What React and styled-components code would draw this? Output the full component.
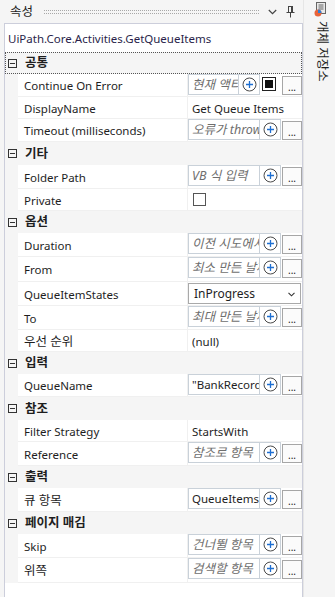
import React from "react";
import styled, { createGlobalStyle } from "styled-components";

const GlobalStyle = createGlobalStyle`
  * { box-sizing: border-box; }
  html, body { margin: 0; padding: 0; background: #f5f5f5; }
  body {
    font-family: "Noto Sans", "Noto Sans CJK KR", sans-serif;
    font-size: 11.5px;
    color: #1e1e1e;
  }
`;

const hasKo = (s) => /[가-힣]/.test(s);

const Shell = styled.div`
  display: flex;
  width: 335px;
  height: 597px;
  background: #f5f5f5;
  overflow: hidden;
`;

const Main = styled.div`
  width: 303px;
  display: flex;
  flex-direction: column;
`;

const TitleBar = styled.div`
  height: 23px;
  display: flex;
  align-items: center;
  padding: 0 8px 0 10px;
`;

const Title = styled.span`
  font-size: 12.5px;
  line-height: 16px;
`;

const Grip = styled.div`
  flex: 1;
  height: 4px;
  margin: 0 9px 0 11px;
  border-top: 1px dotted #a8a8a8;
  border-bottom: 1px dotted #a8a8a8;
`;

const BarIcon = styled.svg`
  display: block;
  margin-left: ${(p) => p.$gap || 0}px;
`;

const Panel = styled.div`
  flex: 1;
  margin-left: 4px;
  border: 1px solid #cccedb;
  border-bottom: none;
  background: #fff;
  display: flex;
  flex-direction: column;
`;

const ActivityName = styled.div`
  height: 28px;
  padding: 7px 0 0 3px;
  line-height: 16px;
  color: #2a1f4a;
`;

const Header = styled.div`
  height: ${(p) => p.$h || 22}px;
  display: flex;
  align-items: center;
  background: #f5f5f5;
  padding-left: 2px;
  font-size: 12.5px;
  font-weight: 700;
  border: 1px dotted ${(p) => (p.$focused ? "#555" : "transparent")};
`;

const Toggle = styled.span`
  position: relative;
  width: 9px;
  height: 9px;
  border: 1px solid #333;
  margin-right: 8px;
  &::after {
    content: "";
    position: absolute;
    left: 1px;
    right: 1px;
    top: 3px;
    height: 1px;
    background: #333;
  }
`;

const HeaderText = styled.span`
  line-height: 16px;
`;

const Row = styled.div`
  display: grid;
  grid-template-columns: 13px 170px 1fr;
  height: ${(p) => p.$h}px;
  background: #f5f5f5;
`;

const Label = styled.div`
  background: #fff;
  border-bottom: 1px solid #f0f0f0;
  border-right: 1px solid #f0f0f0;
  padding: 2px 0 0 6px;
  display: flex;
  align-items: center;
  font-size: ${(p) => (p.$ko ? 12.5 : 11.5)}px;
  line-height: 16px;
  white-space: nowrap;
`;

const Value = styled.div`
  background: #fff;
  border-bottom: 1px solid #f0f0f0;
  display: flex;
  align-items: ${(p) => (p.$top ? "flex-start" : "center")};
  padding: ${(p) => (p.$top ? "0" : "2px 0 0 4px")};
  line-height: 16px;
  white-space: nowrap;
  overflow: hidden;
`;

const Field = styled.div`
  display: flex;
  height: 21px;
  border: 1px solid #c9d1d9;
  width: ${(p) => (p.$narrow ? 72 : 93)}px;
`;

const FieldText = styled.div`
  flex: 1;
  min-width: 0;
  overflow: hidden;
  white-space: nowrap;
  padding: 1px 0 0 3px;
  line-height: 18px;
  font-size: ${(p) => (p.$ko ? 12.5 : 11.5)}px;
  font-style: ${(p) => (p.$placeholder ? "italic" : "normal")};
  color: ${(p) => (p.$placeholder ? "#6e6e6e" : "#1e1e1e")};
`;

const PlusCell = styled.div`
  width: 21px;
  border-left: 1px solid #c9d1d9;
  display: flex;
  align-items: center;
  justify-content: center;
`;

const Square = styled.div`
  width: 14px;
  height: 14px;
  margin: 3px 5px 0 2px;
  border: 1px solid #222;
  padding: 2px;
  &::after {
    content: "";
    display: block;
    width: 100%;
    height: 100%;
    background: #111;
  }
`;

const Ellipsis = styled.div`
  width: 20px;
  height: 19px;
  margin: 2px 0 0 1px;
  border: 1px solid #a6a6a6;
  background: #fbfbfb;
  font-size: 10px;
  line-height: 20px;
  text-align: center;
  color: #222;
`;

const Select = styled.div`
  width: 113px;
  height: 21px;
  margin-top: 1px;
  border: 1px solid #a9a9a9;
  display: flex;
  align-items: center;
  justify-content: space-between;
  padding: 1px 5px 0 5px;
  line-height: 18px;
  font-size: 12px;
`;

const CheckBox = styled.div`
  width: 13px;
  height: 13px;
  margin: 0 0 2px 1px;
  border: 1px solid #555;
  background: #fff;
`;

const Side = styled.div`
  flex: 1;
  display: flex;
  flex-direction: column;
  align-items: center;
  padding-top: 2px;
  border-left: 1px solid #e6e6e6;
`;

const SideLabel = styled.div`
  writing-mode: vertical-rl;
  text-orientation: sideways;
  font-size: 12.5px;
  line-height: 14px;
  margin-top: 4px;
  margin-left: 4px;
  color: #1e1e1e;
`;

const PlusIcon = () => (
  <svg width="15" height="15" viewBox="0 0 15 15">
    <circle cx="7.5" cy="7.5" r="6.5" fill="none" stroke="#4a4a4a" strokeWidth="1" />
    <path d="M7.5 4v7M4 7.5h7" stroke="#1f6fd1" strokeWidth="1.3" />
  </svg>
);

const sections = [
  {
    title: "공통",
    focused: true,
    rows: [
      { label: "Continue On Error", kind: "field", text: "현재 액티비티", ph: true, toggle: true, h: 23 },
      { label: "DisplayName", kind: "text", text: "Get Queue Items" },
      { label: "Timeout (milliseconds)", kind: "field", text: "오류가 throw", ph: true, h: 23 },
    ],
  },
  {
    title: "기타",
    h: 23,
    rows: [
      { label: "Folder Path", kind: "field", text: "VB 식 입력", ph: true },
      { label: "Private", kind: "check" },
    ],
  },
  {
    title: "옵션",
    rows: [
      { label: "Duration", kind: "field", text: "이전 시도에서", ph: true },
      { label: "From", kind: "field", text: "최소 만든 날짜", ph: true, h: 25 },
      { label: "QueueItemStates", kind: "select", text: "InProgress" },
      { label: "To", kind: "field", text: "최대 만든 날짜", ph: true },
      { label: "우선 순위", kind: "text", text: "(null)" },
    ],
  },
  {
    title: "입력",
    rows: [{ label: "QueueName", kind: "field", text: "\"BankRecords\"", h: 23 }],
  },
  {
    title: "참조",
    h: 23,
    rows: [
      { label: "Filter Strategy", kind: "text", text: "StartsWith" },
      { label: "Reference", kind: "field", text: "참조로 항목", ph: true },
    ],
  },
  {
    title: "출력",
    rows: [{ label: "큐 항목", kind: "field", text: "QueueItems" }],
  },
  {
    title: "페이지 매김",
    rows: [
      { label: "Skip", kind: "field", text: "건너뛸 항목", ph: true },
      { label: "위쪽", kind: "field", text: "검색할 항목", ph: true, h: 25 },
    ],
  },
];

const PropValue = ({ row }) => {
  if (row.kind === "text") return <Value>{row.text}</Value>;
  if (row.kind === "check")
    return (
      <Value>
        <CheckBox />
      </Value>
    );
  if (row.kind === "select")
    return (
      <Value $top>
        <Select>
          <span>{row.text}</span>
          <svg width="7" height="5" viewBox="0 0 7 5">
            <path d="M0.5 0.8L3.5 3.8L6.5 0.8" fill="none" stroke="#333" strokeWidth="1.1" />
          </svg>
        </Select>
      </Value>
    );
  return (
    <Value $top>
      <Field $narrow={row.toggle}>
        <FieldText $placeholder={row.ph} $ko={hasKo(row.text)}>
          {row.text}
        </FieldText>
        <PlusCell>
          <PlusIcon />
        </PlusCell>
      </Field>
      {row.toggle && <Square />}
      <Ellipsis>...</Ellipsis>
    </Value>
  );
};

const App = () => {
  return (
    <Shell>
      <GlobalStyle />
      <Main>
        <TitleBar>
          <Title>속성</Title>
          <Grip />
          <BarIcon width="9" height="6" viewBox="0 0 9 6">
            <path d="M0.8 1L4.5 4.7L8.2 1" fill="none" stroke="#444" strokeWidth="1.2" />
          </BarIcon>
          <BarIcon $gap={9} width="9" height="12" viewBox="0 0 9 12">
            <path d="M2 0.5h5M2.5 0.5v6M6.5 0.5v6M5.5 0.5v6M0.5 6.5h8M4.5 6.5v5" fill="none" stroke="#444" strokeWidth="1" />
          </BarIcon>
        </TitleBar>
        <Panel>
          <ActivityName>UiPath.Core.Activities.GetQueueItems</ActivityName>
          {sections.map((s) => (
            <React.Fragment key={s.title}>
              <Header $focused={s.focused} $h={s.h}>
                <Toggle />
                <HeaderText>{s.title}</HeaderText>
              </Header>
              {s.rows.map((r) => (
                <Row key={r.label} $h={r.h || (r.kind === "text" || r.kind === "check" ? 22 : 24)}>
                  <span />
                  <Label $ko={hasKo(r.label)}>{r.label}</Label>
                  <PropValue row={r} />
                </Row>
              ))}
            </React.Fragment>
          ))}
        </Panel>
      </Main>
      <Side>
        <svg width="12" height="15" viewBox="0 0 12 15">
          <rect x="2.5" y="0.5" width="9" height="11" fill="#e8e8e8" stroke="#666" />
          <path d="M4.5 3h5M4.5 5h5M4.5 7h5" stroke="#666" strokeWidth="1" />
          <circle cx="4" cy="11" r="3.5" fill="#e8643a" />
          <path d="M4 7.5a3.5 3.5 0 0 1 3.5 3.5H4z" fill="#2f7fd6" />
        </svg>
        <SideLabel>개체 저장소</SideLabel>
      </Side>
    </Shell>
  );
};

export default App;
